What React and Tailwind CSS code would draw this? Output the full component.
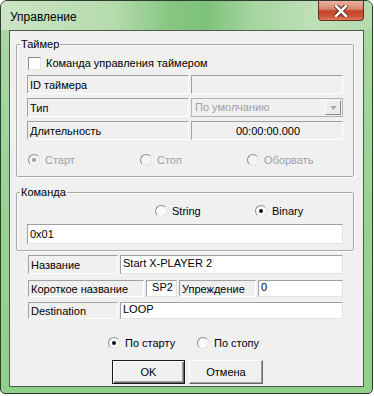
import React from 'react';

const FONT = { fontFamily: '"Liberation Sans", Arial, sans-serif' };

const Radio = ({ checked, disabled, label, className = '' }) => (
  <div className={`flex items-center gap-[5px] ${className}`}>
    <span
      className={`flex h-[12px] w-[12px] items-center justify-center rounded-full border border-t-[#8a8a8a] border-l-[#8a8a8a] border-b-[#e4e4e4] border-r-[#e4e4e4] ${
        disabled ? 'bg-[#f4f4f4]' : 'bg-[#fbfbfb]'
      }`}
    >
      {checked && <span className={`h-[4px] w-[4px] rounded-full ${disabled ? 'bg-[#9a9a9a]' : 'bg-[#111]'}`}></span>}
    </span>
    <span className={disabled ? 'text-[#a0a0a0]' : 'text-black'}>{label}</span>
  </div>
);

// static text with sunken edge
const Label = ({ children, className = '' }) => (
  <div className={`flex items-center border border-t-[#a0a0a0] border-l-[#a0a0a0] border-b-white border-r-white pl-[2px] pt-[1px] ${className}`}>
    {children}
  </div>
);

const Edit = ({ children, className = '' }) => (
  <div className={`flex items-center border border-t-[#a0a0a0] border-l-[#a0a0a0] border-b-[#e3e3e3] border-r-[#e3e3e3] bg-white pl-[2px] ${className}`}>
    {children}
  </div>
);

const Group = ({ title, className = '', children }) => (
  <div className={`relative rounded-[2px] border border-[#a8a8a8] shadow-[inset_1px_1px_0_#fff,1px_1px_0_#fff] ${className}`}>
    <span className="absolute left-[3px] top-[-8px] bg-[#f0f0f0] px-[1px] leading-[14px]">{title}</span>
    {children}
  </div>
);

const App = () => {
  return (
    <div className="h-[396px] w-[374px] bg-white text-[11px] leading-[13px] text-black" style={FONT}>
      <div className="flex h-[394px] w-[373px] flex-col rounded-t-[7px] rounded-b-[5px] border border-[#2f3d2f] bg-[linear-gradient(180deg,#a9d9a3_0%,#96d290_60%,#8fd089_100%)]">
        {/* title bar */}
        <div className="flex h-[29px] items-start justify-between rounded-t-[6px] bg-[linear-gradient(90deg,#cbe5c4_0%,#b6dbae_30%,#86c682_46%,#7dc27a_55%,#a6d59f_68%,#bfe0b8_85%,#b4daad_100%)]">
          <span className="mt-[9px] ml-[9px] text-[12px] leading-[14px] text-black">Управление</span>
          <div className="mr-[8px] flex h-[20px] w-[46px] items-center justify-center rounded-b-[4px] border border-t-0 border-[#6b2a1e] bg-[linear-gradient(180deg,#eab3a2_0%,#d88a70_40%,#c2432a_55%,#cc5535_80%,#e07a5a_100%)]">
            <svg width="14" height="12" viewBox="0 0 14 12">
              <path d="M2 1 L12 11 M12 1 L2 11" stroke="#4a1a12" strokeWidth="4.4" strokeLinecap="square" />
              <path d="M2 1 L12 11 M12 1 L2 11" stroke="#fff" strokeWidth="2.6" strokeLinecap="square" />
            </svg>
          </div>
        </div>

        {/* client area */}
        <div className="mx-[8px] flex h-[357px] flex-col border border-[#4b5a4b] bg-[#f0f0f0]">
          <Group title="Таймер" className="mt-[13px] ml-[6px] h-[133px] w-[338px]">
            <div className="flex flex-col pl-[10px] pt-[11px]">
              <div className="flex h-[14px] items-center gap-[5px] pl-[1px]">
                <span className="h-[13px] w-[13px] border border-t-[#8a8a8a] border-l-[#8a8a8a] border-b-[#e4e4e4] border-r-[#e4e4e4] bg-white"></span>
                <span>Команда управления таймером</span>
              </div>
              <div className="mt-[5px] flex flex-col gap-[4px]">
                <div className="flex h-[19px] gap-[2px]">
                  <Label className="w-[162px]">ID таймера</Label>
                  <Label className="w-[152px]"></Label>
                </div>
                <div className="flex h-[19px] gap-[2px]">
                  <Label className="w-[162px]">Тип</Label>
                  <div className="flex w-[152px] items-center justify-between border border-[#b4b4b4] pl-[3px] pr-[1px] text-[#a0a0a0]">
                    <span>По умолчанию</span>
                    <span className="flex h-[15px] w-[16px] items-center justify-center border border-t-white border-l-white border-b-[#8a8a8a] border-r-[#8a8a8a] bg-[#ececec]">
                      <svg width="7" height="4" viewBox="0 0 7 4">
                        <path d="M0 0 H7 L3.5 4 Z" fill="#a8a8a8" />
                      </svg>
                    </span>
                  </div>
                </div>
                <div className="flex h-[19px] gap-[2px]">
                  <Label className="w-[162px]">Длительность</Label>
                  <Label className="w-[152px] justify-center">00:00:00.000</Label>
                </div>
              </div>
              <div className="mt-[13px] flex h-[14px] items-center pl-[1px]">
                <Radio checked disabled label="Старт" className="w-[112px]" />
                <Radio disabled label="Стоп" className="w-[107px]" />
                <Radio disabled label="Оборвать" />
              </div>
            </div>
          </Group>

          <Group title="Команда" className="mt-[15px] ml-[6px] h-[59px] w-[338px]">
            <div className="flex flex-col pl-[10px] pt-[11px]">
              <div className="flex h-[14px] items-center pl-[128px]">
                <Radio label="String" className="w-[100px]" />
                <Radio checked label="Binary" />
              </div>
              <Edit className="mt-[6px] h-[20px] w-[316px]">0x01</Edit>
            </div>
          </Group>

          <div className="ml-[18px] mt-[4px] flex flex-col">
            <div className="flex h-[19px] gap-[2px]">
              <Label className="w-[90px]">Название</Label>
              <Edit className="w-[223px] items-start pt-[1px]">Start X-PLAYER 2</Edit>
            </div>
            <div className="mt-[6px] flex h-[17px] gap-[2px]">
              <Label className="w-[116px]">Короткое название</Label>
              <Edit className="w-[31px] justify-center items-start pl-0">SP2</Edit>
              <Label className="w-[77px]">Упреждение</Label>
              <Edit className="w-[85px] items-start">0</Edit>
            </div>
            <div className="mt-[5px] flex h-[17px] gap-[2px]">
              <Label className="w-[90px]">Destination</Label>
              <Edit className="w-[223px] items-start">LOOP</Edit>
            </div>
          </div>

          <div className="mt-[17px] flex h-[14px] items-center pl-[98px]">
            <Radio checked label="По старту" className="w-[89px]" />
            <Radio label="По стопу" />
          </div>

          <div className="mt-[10px] flex gap-[4px] pl-[102px]">
            <button className="flex h-[24px] w-[73px] items-center justify-center border border-[#1a1a1a] bg-[#f0f0f0] p-0 shadow-[inset_1px_1px_0_#fff,inset_-1px_-1px_0_#696969,inset_-2px_-2px_0_#a0a0a0]">
              OK
            </button>
            <button className="flex h-[24px] w-[74px] items-center justify-center border border-t-white border-l-white border-b-[#696969] border-r-[#696969] bg-[#f0f0f0] p-0 shadow-[inset_-1px_-1px_0_#a0a0a0]">
              Отмена
            </button>
          </div>
        </div>
      </div>
    </div>
  );
};

export default App;
